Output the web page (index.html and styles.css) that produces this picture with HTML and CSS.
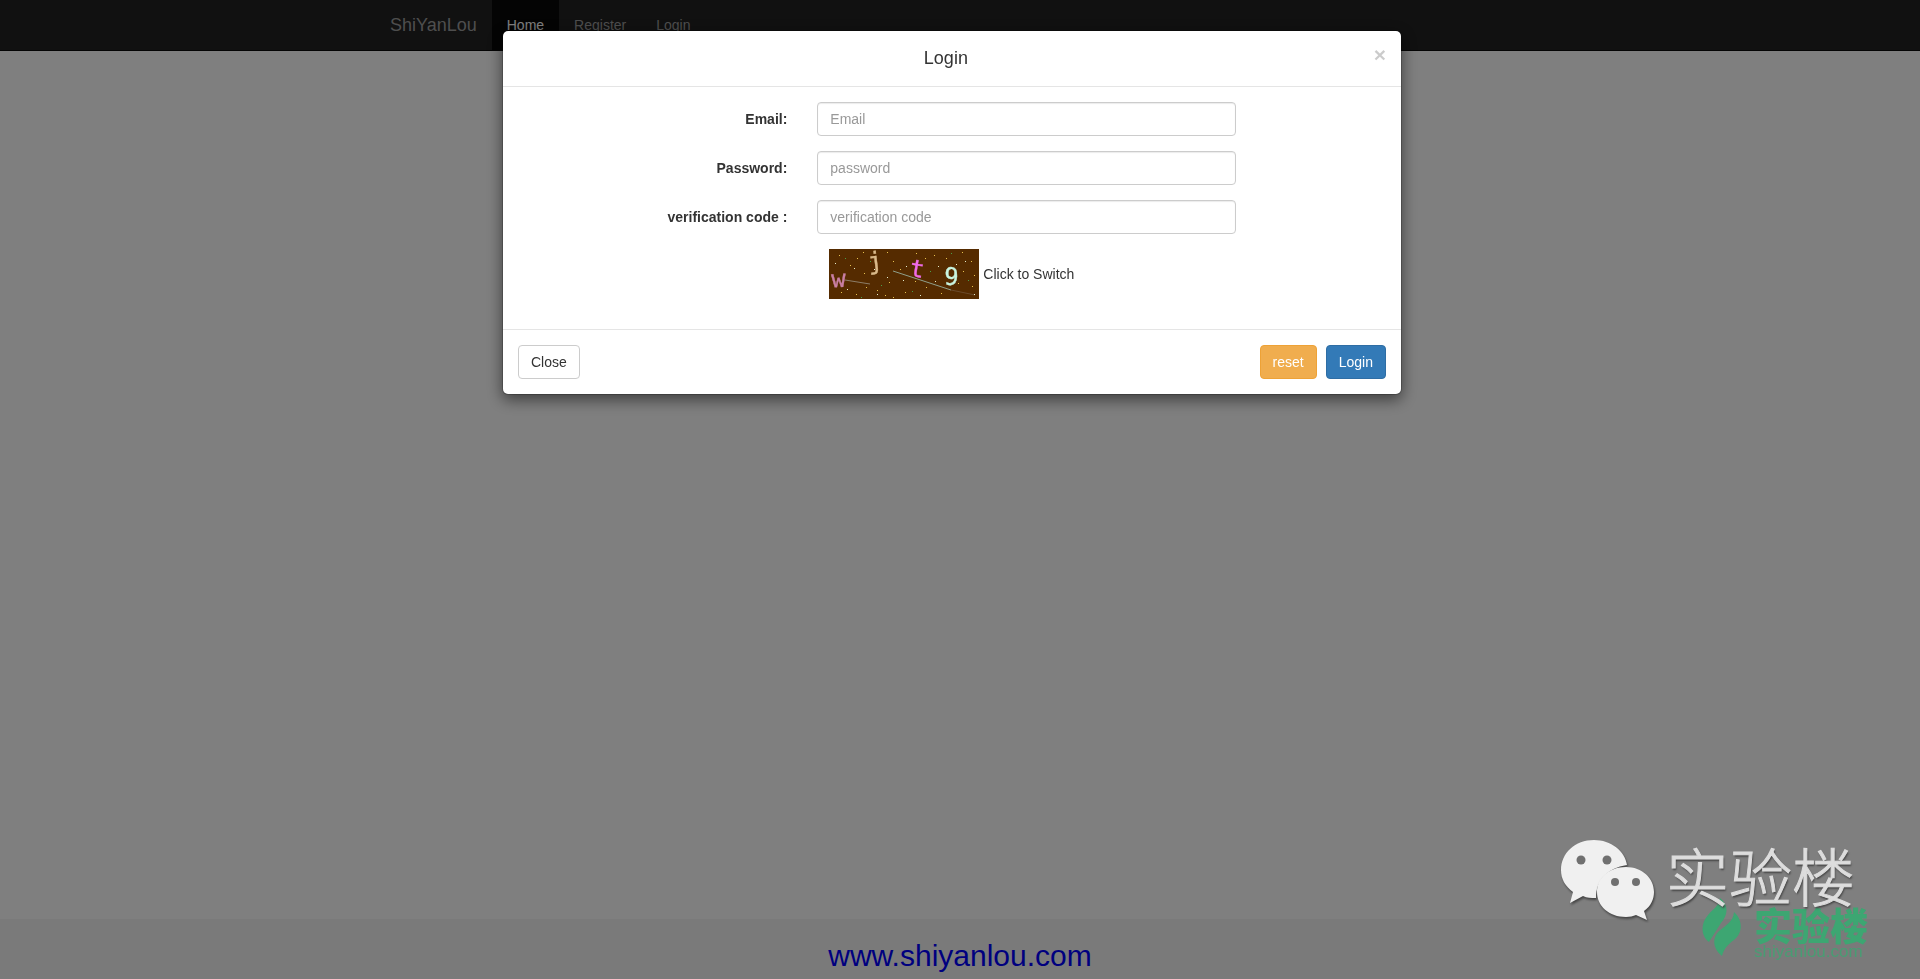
FILE: index.html
```html
<!DOCTYPE html>
<html lang="en">
<head>
<meta charset="utf-8">
<title>ShiYanLou</title>
<link rel="stylesheet" href="styles.css">
</head>
<body>
<div class="page">
  <nav class="navbar">
    <div class="container">
      <a class="brand" href="#">ShiYanLou</a>
      <a class="nav-link active" href="#">Home</a>
      <a class="nav-link" href="#">Register</a>
      <a class="nav-link" href="#">Login</a>
    </div>
  </nav>
  <main class="content"></main>
  <footer class="footer"><a href="#">www.shiyanlou.com</a></footer>
</div>

<div class="backdrop"></div>
<div class="modal" role="dialog" aria-labelledby="title">
  <form class="dialog">
    <header class="dialog-header">
      <h4 class="title" id="title">Login</h4>
      <button class="close" type="button" aria-label="Dismiss">×</button>
    </header>
    <div class="dialog-body">
      <div class="row">
        <label for="email">Email:</label>
        <input class="field" id="email" type="email" placeholder="Email">
      </div>
      <div class="row">
        <label for="password">Password:</label>
        <input class="field" id="password" type="password" placeholder="password">
      </div>
      <div class="row">
        <label for="code">verification code :</label>
        <input class="field" id="code" type="text" placeholder="verification code">
      </div>
      <div class="row">
        <button class="captcha" type="button">
          <svg width="150" height="50" viewBox="0 0 150 50">
            <rect width="150" height="50" fill="#552b00"/>
            <g fill="none" stroke-width="1">
              <path stroke="#8c7d68" d="M16 31L41 35"/>
              <path stroke="#8fa08c" d="M64 22L122 41"/>
              <path stroke="#6b4a2a" d="M122 41L146 46"/>
            </g>
            <path fill="#e8c24e" d="M10 6h1v1h-1zM21 16h1v1h-1zM34 3h1v1h-1zM28 9h1v1h-1zM48 41h1v1h-1zM58 3h1v1h-1zM64 12h1v1h-1zM71 20h1v1h-1zM87 4h1v1h-1zM96 9h1v1h-1zM105 6h1v1h-1zM117 9h1v1h-1zM133 3h1v1h-1zM142 12h1v1h-1zM134 22h1v1h-1zM145 26h1v1h-1zM129 34h1v1h-1zM143 37h1v1h-1zM112 44h1v1h-1zM97 38h1v1h-1zM86 32h1v1h-1zM76 43h1v1h-1zM60 33h1v1h-1zM56 46h1v1h-1zM37 38h1v1h-1zM27 45h1v1h-1zM12 43h1v1h-1zM3 27h1v1h-1zM35 24h1v1h-1zM64 48h1v1h-1z"/>
            <path fill="#e6efcf" d="M6 14h1v1h-1zM25 19h1v1h-1zM45 20h1v1h-1zM77 17h1v1h-1zM74 31h1v1h-1zM91 46h1v1h-1zM109 17h1v1h-1zM127 15h1v1h-1zM136 12h1v1h-1zM145 45h1v1h-1zM48 45h1v1h-1zM18 40h1v1h-1zM58 28h1v1h-1zM106 32h1v1h-1z"/>
            <path fill="#4aa04a" d="M16 9h1v1h-1zM41 12h1v1h-1zM83 42h1v1h-1zM101 22h1v1h-1zM139 31h1v1h-1zM32 48h1v1h-1zM52 36h1v1h-1zM122 4h1v1h-1z"/>
            <g class="captcha-glyphs" text-anchor="middle">
              <text x="10" y="38" fill="#c97fa4" stroke="#c97fa4" transform="rotate(-3 10 38)">w</text>
              <text x="47" y="20" fill="#d9b98a" stroke="#d9b98a" transform="rotate(-7 47 20)">j</text>
              <text x="87" y="28" fill="#f06be8" stroke="#f06be8" transform="rotate(9 87 28)">t</text>
              <text x="122" y="36" fill="#c9f5e0" stroke="#c9f5e0" transform="rotate(3 122 36)">9</text>
            </g>
          </svg>
          <span>Click to Switch</span>
        </button>
      </div>
    </div>
    <footer class="dialog-footer">
      <button class="btn" type="button">Close</button>
      <div class="actions">
        <button class="btn warning" type="reset">reset</button>
        <button class="btn primary" type="button">Login</button>
      </div>
    </footer>
  </form>
</div>

<div class="watermark site" lang="zh">
  <svg width="40" height="60" viewBox="0 0 40 60" fill="#3da672">
    <path d="M18 1C27 8 26 18 19 26L7 45C-2 38 -1 26 6 18C12 11 17 9 18 1Z"/>
    <path d="M32 15C42 24 40 37 32 43C25 48 22 52 20 59C11 52 10 42 16 35C25 27 31 25 32 15Z"/>
  </svg>
  <div class="site-text">
    <strong>实验楼</strong>
    <small>shiyanlou.com</small>
  </div>
</div>
<div class="watermark wechat" lang="zh">
  <svg width="98" height="84" viewBox="0 0 98 84">
    <g fill="#f0f0f0">
      <path d="M34 1C15 1 1 14 1 31C1 40 5 47 13 53L10 64L23 57C27 59 31 59 36 59C36 42 47 29 67 26C65 12 51 1 34 1Z"/>
      <path d="M66 28C49 28 37 39 37 53C37 67 49 78 66 78C70 78 73 77 76 76L87 81L84 72C91 67 94 60 94 53C94 39 82 28 66 28Z"/>
    </g>
    <g fill="#707070">
      <circle cx="21" cy="21" r="4.5"/><circle cx="47" cy="21" r="4.5"/>
      <circle cx="55" cy="43" r="4"/><circle cx="76" cy="43" r="4"/>
    </g>
  </svg>
  <span>实验楼</span>
</div>
</body>
</html>
```
FILE: styles.css
```css
* { box-sizing: border-box; }

body {
  margin: 0;
  font: 14px/20px "Liberation Sans", Arial, sans-serif;
  color: #333;
  background: #fff;
}

button, input { font: inherit; color: inherit; }
a { text-decoration: none; }

.page {
  display: flex;
  flex-direction: column;
  min-height: 100vh;
}

.navbar {
  background: #222;
  border-bottom: 1px solid #080808;
}

.container {
  display: flex;
  max-width: 1170px;
  margin: 0 auto;
}

.brand, .nav-link {
  padding: 15px;
  color: #9d9d9d;
}

.brand { font-size: 18px; }
.nav-link.active { color: #fff; background: #080808; }
.content { flex: 1; }

.footer {
  height: 60px;
  padding-top: 19px;
  background: #f5f5f5;
  text-align: center;
  font-size: 30px;
  line-height: 36px;
}

.footer a { color: #00f; }

.backdrop {
  position: fixed;
  inset: 0;
  background: rgba(0, 0, 0, .5);
}

.modal {
  position: fixed;
  inset: 0;
  padding: 30px 16px 30px 0;
  overflow: hidden;
}

.dialog {
  max-width: 900px;
  margin: 0 auto;
  background: #fff;
  background-clip: padding-box;
  border: 1px solid rgba(0, 0, 0, .2);
  border-radius: 6px;
  box-shadow: 0 5px 15px rgba(0, 0, 0, .5);
}

.dialog-header {
  display: flex;
  align-items: flex-start;
  padding: 15px;
  border-bottom: 1px solid #e5e5e5;
}

.title {
  flex: 1;
  margin: 0;
  text-align: center;
  font-size: 18px;
  font-weight: 500;
  line-height: 25px;
}

.close {
  padding: 0;
  border: 0;
  background: none;
  color: #000;
  font-size: 21px;
  font-weight: 700;
  line-height: 18px;
  opacity: .2;
}

.dialog-body {
  display: grid;
  gap: 15px;
  padding: 15px 0 30px;
}

.row {
  display: grid;
  grid-template-columns: 4fr 6fr 2fr;
}

.row label {
  padding: 7px 15px;
  text-align: right;
  font-weight: 700;
}

.field {
  height: 34px;
  margin: 0 15px;
  padding: 6px 12px;
  min-width: 0;
  color: #555;
  background: #fff;
  border: 1px solid #ccc;
  border-radius: 4px;
  box-shadow: inset 0 1px 1px rgba(0, 0, 0, .08);
}

.field::placeholder { color: #999; }

.captcha {
  grid-column: 2;
  justify-self: start;
  display: flex;
  align-items: center;
  gap: 4px;
  margin: 0 15px;
  padding: 0 12px;
  border: 0;
  background: none;
}

.captcha svg { overflow: visible; }

.captcha-glyphs {
  font: 24px "DejaVu Sans Mono", monospace;
  stroke-width: 0.4;
}

.dialog-footer {
  display: flex;
  justify-content: space-between;
  padding: 15px;
  border-top: 1px solid #e5e5e5;
}

.actions { display: flex; gap: 9px; }

.btn {
  padding: 6px 12px;
  background: #fff;
  border: 1px solid #ccc;
  border-radius: 4px;
}

.btn.warning { color: #fff; background: #f0ad4e; border-color: #eea236; }
.btn.primary { color: #fff; background: #337ab7; border-color: #2e6da4; }

.watermark {
  position: fixed;
  display: flex;
  font-family: "Noto Sans CJK SC", sans-serif;
}

.wechat {
  right: 65px;
  bottom: 56px;
  gap: 8px;
  align-items: flex-start;
  color: #ddd;
  font-size: 63px;
  font-weight: 300;
  line-height: 70px;
  text-shadow: 1px 2px 2px #444;
  -webkit-text-stroke: 1px #ddd;
}

.wechat path { filter: drop-shadow(1px 2px 1px #444); }

.site {
  right: 52px;
  bottom: 17px;
  gap: 12px;
  color: #3da672;
}

.site-text {
  display: flex;
  flex-direction: column;
  padding-top: 9px;
}

.site strong { font-size: 38px; font-weight: 900; line-height: 36px; }
.site small { font: 17px/20px "Liberation Sans", sans-serif; opacity: .8; }
```
